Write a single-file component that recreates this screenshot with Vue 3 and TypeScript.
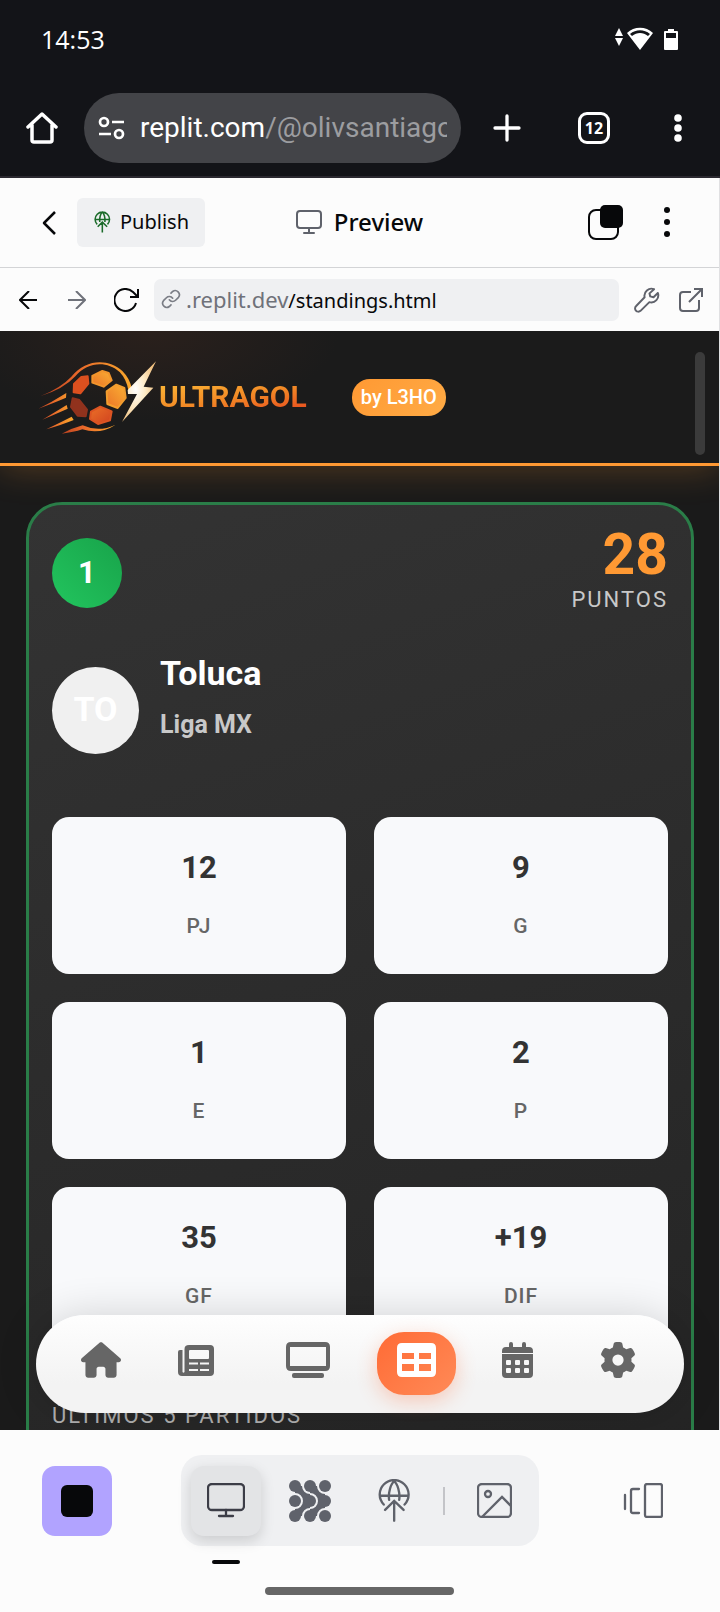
<script setup lang="ts">
interface Stat {
  value: string
  label: string
}

const stats: Stat[] = [
  { value: '12', label: 'PJ' },
  { value: '9', label: 'G' },
  { value: '1', label: 'E' },
  { value: '2', label: 'P' },
  { value: '35', label: 'GF' },
  { value: '+19', label: 'DIF' },
]

const dotRows: number[] = [18, 63, 108]
const calendarRows: number[] = [18, 26]
const calendarCols: number[] = [4, 13, 22]
</script>

<template>
  <div class="screen">
    <header class="status">
      <span class="clock">14:53</span>
      <svg class="status-icons" width="63" height="24" viewBox="0 0 63 24" fill="#fff" aria-hidden="true">
        <path d="M4 1l4 8H0zM4 19l4-8H0z" />
        <path fill-rule="evenodd" d="M12 6C19-1 31-1 38 6L25 23zM15 7l2 2c5-4 11-4 16 0l2-2c-6-5-14-5-20 0z" />
        <path fill-rule="evenodd" d="M53 2h6v2h3q1 0 1 1v17q0 1-1 1H50q-1 0-1-1V5q0-1 1-1h3zM51 6v5h10V6z" />
      </svg>
    </header>

    <div class="browser">
      <button class="plain home" aria-label="Inicio">
        <svg width="32" height="32" viewBox="0 0 32 32" fill="none" stroke="#fff" stroke-width="3.500" stroke-linejoin="round" stroke-linecap="round"><path d="M2 15L16 2l14 13M6 13v15q0 2 2 2h16q2 0 2-2V13" /></svg>
      </button>
      <button class="omnibox">
        <svg width="27" height="24" viewBox="0 0 27 24" fill="none" stroke="#fff" stroke-width="2.700" aria-hidden="true"><circle cx="6" cy="6" r="4" /><path d="M14 6h12M1 18h12" /><circle cx="21" cy="18" r="4" /></svg>
        <span class="omni-text">replit.com<span class="dim">/@olivsantiago</span></span>
      </button>
      <button class="plain" aria-label="Nueva pestaña">
        <svg width="28" height="28" viewBox="0 0 28 28" stroke="#fff" stroke-width="3.300" stroke-linecap="round"><path d="M14 2v24M2 14h24" /></svg>
      </button>
      <button class="tabs" aria-label="12 pestañas">12</button>
      <button class="plain" aria-label="Más">
        <svg width="8" height="28" viewBox="0 0 8 28" fill="#fff"><circle cx="4" cy="4" r="3.800" /><circle cx="4" cy="14" r="3.800" /><circle cx="4" cy="24" r="3.800" /></svg>
      </button>
    </div>

    <div class="page">
      <div class="pane-head">
        <div class="side">
          <button class="plain back" aria-label="Atrás">
            <svg width="16" height="26" viewBox="0 0 16 26" fill="none" stroke="#07080a" stroke-width="2.500" stroke-linejoin="round"><path d="M14 2L3 13l11 11" /></svg>
          </button>
          <button class="publish">
            <svg width="17" height="22" viewBox="54 148 98 128" fill="none" stroke="#1b6b2a" stroke-width="9" aria-hidden="true"><path d="M72 226A42 42 0 1 1 132 226M57 198H147M87 212C84 188 92 162 102 154C112 162 120 188 117 212M102 273V213M75 240L102 213L130 240" /></svg>
            Publish
          </button>
        </div>
        <h1 class="preview">
          <svg width="26" height="24" viewBox="0 0 26 24" fill="none" stroke="#5f626b" stroke-width="2" stroke-linecap="round" aria-hidden="true"><rect x="1" y="1" width="24" height="17" rx="3" /><path d="M13 18v5M8 23h10" /></svg>
          Preview
        </h1>
        <div class="side end">
          <button class="plain" aria-label="Pestañas abiertas">
            <svg width="35" height="35" viewBox="0 0 35 35"><rect x="1" y="5" width="29" height="29" rx="7" fill="none" stroke="#07080a" stroke-width="2" /><rect x="12" y="0" width="23" height="23" rx="5" fill="#07080a" /></svg>
          </button>
          <button class="plain" aria-label="Opciones">
            <svg width="6" height="31" viewBox="0 0 6 31" fill="#07080a"><circle cx="3" cy="3" r="3" /><circle cx="3" cy="15" r="3" /><circle cx="3" cy="27" r="3" /></svg>
          </button>
        </div>
      </div>

      <div class="url-row">
        <button class="plain" aria-label="Anterior">
          <svg width="18" height="18" viewBox="0 0 18 18" fill="none" stroke="#07080a" stroke-width="2"><path d="M18 9H1M10 0L1 9l9 9" /></svg>
        </button>
        <button class="plain forward" aria-label="Siguiente">
          <svg width="18" height="18" viewBox="0 0 18 18" fill="none" stroke="#6f727a" stroke-width="2"><path d="M0 9h17M8 0l9 9-9 9" /></svg>
        </button>
        <button class="plain reload" aria-label="Recargar">
          <svg width="26" height="24" viewBox="0 0 26 24" fill="none" stroke="#07080a" stroke-width="2"><path d="M22 15A11 11 0 1 1 19 4L24 9M24 1v8h-8" /></svg>
        </button>
        <button class="url-box">
          <svg width="20" height="20" viewBox="0 0 24 24" fill="none" stroke="#7a7d85" stroke-width="2" stroke-linecap="round" aria-hidden="true"><path d="M10 13a5 5 0 0 0 7.500.5l3.500-3.500a5 5 0 0 0-7-7l-2 2M14 11a5 5 0 0 0-7.500-.5l-3.500 3.500a5 5 0 0 0 7 7l2-2" /></svg>
          <span><span class="host">.replit.dev</span><span class="path">/standings.html</span></span>
        </button>
        <button class="plain wrench" aria-label="Herramientas">
          <svg width="26" height="26" viewBox="0 0 24 24" fill="none" stroke="#5f626b" stroke-width="1.800" stroke-linejoin="round"><path d="M18.500 2A6.500 6.500 0 0 0 9.800 9.500L2 17.500a2.800 2.800 0 0 0 4 4.500l8.200-8A6.500 6.500 0 0 0 22 5.500l-4 4-3-.8-.7-2.800z" /></svg>
        </button>
        <button class="plain" aria-label="Abrir en otra pestaña">
          <svg width="25" height="25" viewBox="0 0 25 25" fill="none" stroke="#5f626b" stroke-width="2"><path d="M12 5H4Q1 5 1 8v13q0 3 3 3h13q3 0 3-3v-8M15 2h8v8M23 2L10 15" /></svg>
        </button>
      </div>

      <main class="site">
        <div class="site-head">
          <a class="logo" href="#" aria-label="UltraGol">
            <svg width="122" height="75" viewBox="114 88 366 225" aria-hidden="true">
              <defs>
                <linearGradient id="flame" x1="0" x2="1"><stop offset="0" stop-color="#b8401f" /><stop offset=".4" stop-color="#e8672a" /><stop offset="1" stop-color="#fba92c" /></linearGradient>
                <linearGradient id="panel" x1="0" y1="1" x2="1" y2="0"><stop offset="0" stop-color="#ea7427" /><stop offset="1" stop-color="#fbb034" /></linearGradient>
                <linearGradient id="ember" x1="0" y1="0" x2="1" y2="1"><stop offset="0" stop-color="#ec7127" /><stop offset="1" stop-color="#d0421f" /></linearGradient>
                <radialGradient id="bolt" cx=".4" cy=".45" r=".6"><stop offset="0" stop-color="#fff" /><stop offset=".5" stop-color="#fde9c4" /><stop offset="1" stop-color="#f0c080" /></radialGradient>
              </defs>
              <g fill="url(#flame)">
                <path d="M125 196Q185 172 217 138C262 82 330 84 370 121Q393 144 398 173L388 178Q382 145 362 124C322 89 265 94 229 137Q193 176 125 196z" />
                <path d="M118 234Q158 215 202 187L201 201Q166 216 118 234zM130 267Q164 247 203 223L206 234Q172 249 130 267zM142 296Q178 278 218 258L224 268Q190 282 142 296z" />
                <path d="M188 309Q220 292 251 284Q299 306 350 282Q303 313 250 296Q224 305 188 309z" />
              </g>
              <g stroke-width="6" stroke-linejoin="round">
                <path fill="#dc501f" stroke="#dc501f" d="M247 139L266 137L268 159L244 188L224 185L225 160z" />
                <path fill="url(#panel)" stroke="#f2952c" d="M280 136L310 121L329 127L338 149L314 168L280 156z" />
                <path fill="url(#panel)" stroke="#f29d2e" d="M323 182L352 162L376 172L380 202L356 232L325 220z" />
                <path fill="url(#ember)" stroke="#dc5423" d="M304 228L338 242L333 269L297 280L273 265L276 243z" />
                <path fill="#91321d" stroke="#91321d" d="M221 203L241 208L264 237L260 257L236 255L216 229z" />
              </g>
              <path fill="url(#bolt)" d="M471 92L386 178L387 190L414 190L369 274L463 171L434 168z" />
            </svg>
            <span class="wordmark">ULTRAGOL</span>
          </a>
          <span class="badge">by L3HO</span>
          <span class="thumb"></span>
        </div>

        <article class="card">
          <div class="card-top">
            <span class="rank">1</span>
            <div class="points">
              <strong>28</strong>
              <span>PUNTOS</span>
            </div>
          </div>
          <div class="team">
            <span class="crest">TO</span>
            <div>
              <h2>Toluca</h2>
              <p>Liga MX</p>
            </div>
          </div>
          <dl class="stats">
            <div v-for="stat in stats" :key="stat.label" class="stat">
              <dd>{{ stat.value }}</dd>
              <dt>{{ stat.label }}</dt>
            </div>
          </dl>
          <p class="recent">ÚLTIMOS 5 PARTIDOS</p>
        </article>

        <nav class="dock">
          <a href="#" aria-label="Inicio">
            <svg width="40" height="36" viewBox="0 0 576 512" fill="#666"><path d="M575.800 255.500c0 18-15 32.100-32 32.100h-32l.7 160.200c0 2.700-.2 5.400-.5 8.100V472c0 22.100-17.900 40-40 40H392c-22.100 0-40-17.900-40-40v-88c0-17.700-14.300-32-32-32h-64c-17.700 0-32 14.300-32 32v88c0 22.100-17.900 40-40 40h-80c-22.100 0-40-17.900-40-40V287.600H32c-18 0-32-14-32-32.100 0-9 3-17 10-24L266.400 8c7-7 15-8 22-8s15 2 21 7l255.400 224.500c8 7 12 15 11 24z" /></svg>
          </a>
          <a href="#" aria-label="Noticias">
            <svg width="36" height="31" viewBox="0 0 36 31" fill="#666"><path fill-rule="evenodd" d="M11 0h21q4 0 4 4v23q0 4-4 4H4q-4 0-4-4V7q0-2 2-2h2.500v22q1 1.500 2 0V4q0-4 4.500-4zM12 5q-1 0-1 1v7q0 1 1 1h18q1 0 1-1V6q0-1-1-1zM11 17.500v2h9v-2zM22 17.500v2h9v-2zM11 24v2h9v-2zM22 24v2h9v-2z" /></svg>
          </a>
          <a href="#" aria-label="En vivo">
            <svg width="44" height="36" viewBox="0 0 44 36" fill="#666"><path fill-rule="evenodd" d="M5 0h34q5 0 5 5v19q0 5-5 5H5q-5 0-5-5V5q0-5 5-5zM4 5v19h36V5z" /><rect x="6" y="31" width="32" height="5" rx="2" /></svg>
          </a>
          <a class="current" href="#" aria-label="Tabla" aria-current="page">
            <svg width="39" height="34" viewBox="0 0 39 34" fill="#fff"><path fill-rule="evenodd" d="M5 0h29q5 0 5 5v24q0 5-5 5H5q-5 0-5-5V5q0-5 5-5zM5 10v6h12v-6zM22 10v6h12v-6zM5 21v7h12v-7zM22 21v7h12v-7z" /></svg>
          </a>
          <a href="#" aria-label="Calendario">
            <svg width="31" height="36" viewBox="0 0 31 36">
              <path fill="#666" d="M4 5h3V2a2 2 0 0 1 4 0v3h9V2a2 2 0 0 1 4 0v3h3q4 0 4 4v2H0V9q0-4 4-4zM0 12h31v20q0 4-4 4H4q-4 0-4-4z" />
              <g fill="#f8f8f8">
                <template v-for="y in calendarRows" :key="y">
                  <rect v-for="x in calendarCols" :key="x" :x="x" :y="y" width="5" height="5" rx="1" />
                </template>
              </g>
            </svg>
          </a>
          <a href="#" aria-label="Ajustes">
            <svg width="36" height="36" viewBox="0 0 512 512" fill="#666"><path d="M495.900 166.600c3.200 8.700.5 18.400-6.400 24.600l-43.300 39.400c1.100 8.300 1.700 16.800 1.700 25.400s-.6 17.100-1.700 25.400l43.300 39.400c6.900 6.200 9.600 15.900 6.400 24.600-4.400 11.900-9.700 23.300-15.800 34.300l-4.700 8.100c-6.600 11-14 21.400-22.100 31.200-5.900 7.200-15.700 9.600-24.500 6.800l-55.700-17.700c-13.400 10.300-28.200 18.900-44 25.400l-12.500 57.100c-2 9.100-9 16.300-18.200 17.800-13.800 2.300-28 3.500-42.500 3.500s-28.700-1.200-42.500-3.500c-9.200-1.500-16.200-8.700-18.200-17.800l-12.500-57.100c-15.800-6.500-30.600-15.100-44-25.400l-55.700 17.700c-8.800 2.800-18.600.3-24.500-6.800-8.100-9.800-15.500-20.200-22.100-31.200l-4.700-8.100c-6.100-11-11.400-22.400-15.800-34.300-3.200-8.700-.5-18.400 6.400-24.600l43.300-39.400C64.600 273.100 64 264.600 64 256s.6-17.100 1.700-25.400l-43.300-39.400c-6.900-6.200-9.600-15.900-6.400-24.600 4.400-11.900 9.700-23.300 15.800-34.300l4.700-8.100c6.600-11 14-21.400 22.100-31.200 5.900-7.200 15.700-9.600 24.500-6.800l55.700 17.700c13.400-10.300 28.200-18.900 44-25.400l12.500-57.100c2-9.100 9-16.300 18.200-17.800C227.300 1.200 241.500 0 256 0s28.700 1.200 42.500 3.500c9.200 1.500 16.200 8.700 18.200 17.800l12.500 57.100c15.800 6.500 30.600 15.100 44 25.400l55.700-17.700c8.800-2.800 18.600-.3 24.500 6.800 8.100 9.800 15.500 20.200 22.100 31.200l4.700 8.100c6.100 11 11.400 22.400 15.800 34.300zM256 336a80 80 0 1 0 0-160 80 80 0 1 0 0 160z" /></svg>
          </a>
        </nav>
      </main>
    </div>

    <footer class="tools">
      <div class="tool-row">
        <button class="stop" aria-label="Detener"><span></span></button>
        <div class="group">
          <button class="tool active" aria-label="Preview">
            <svg width="38" height="35" viewBox="0 0 38 35" fill="none" stroke="#3c3d47" stroke-width="2.300" stroke-linecap="round"><rect x="1" y="1" width="36" height="26" rx="4" /><path d="M19 27v6M12 33h14" /></svg>
          </button>
          <button class="tool" aria-label="Agent">
            <svg width="42" height="42" viewBox="0 0 126 126" fill="#5f626b">
              <template v-for="y in dotRows" :key="y">
                <circle v-for="x in dotRows" :key="x" :cx="x" :cy="y" r="18" />
              </template>
              <path d="M18 18H39A24 24 0 0 0 63 42V63H42A24 24 0 0 0 18 39ZM63 63V84A24 24 0 0 0 39 108H18V87A24 24 0 0 0 42 63Z" />
              <path d="M63 18H84A24 24 0 0 0 108 42V63H87A24 24 0 0 0 63 39ZM108 63V84A24 24 0 0 0 84 108H63V87A24 24 0 0 0 87 63Z" />
            </svg>
          </button>
          <button class="tool" aria-label="Publicar">
            <svg width="33" height="43" viewBox="54 148 98 128" fill="none" stroke="#5f626b" stroke-width="7" stroke-linecap="round"><path d="M71 224A43 43 0 1 1 133 224M59 198H145M87 210C84 188 92 162 102 155C112 162 120 188 117 210M102 272V213M75 240L102 213L130 240" /></svg>
          </button>
          <span class="rule"></span>
          <button class="tool" aria-label="Imagen">
            <svg width="35" height="35" viewBox="0 0 35 35" fill="none" stroke="#5f626b" stroke-width="2.300"><rect x="1" y="1" width="33" height="33" rx="4" /><circle cx="11" cy="11" r="3" /><path d="M5 34l20-20 9 9" /></svg>
          </button>
        </div>
        <button class="plain panes" aria-label="Paneles">
          <svg width="40" height="35" viewBox="0 0 40 35" fill="none" stroke="#5f626b" stroke-width="2.300" stroke-linecap="round"><rect x="22" y="1" width="17" height="33" rx="2" /><path d="M16 6h-6q-2 0-2 2v20q0 2 2 2h6M2 12v14" /></svg>
        </button>
      </div>
      <span class="marker"></span>
      <span class="gesture"></span>
    </footer>
  </div>
</template>

<style>
body {
  margin: 0;
  background: #fcfcfc;
}
</style>

<style scoped>
.screen {
  display: flex;
  flex-direction: column;
  height: 100vh;
  background: #131418;
  font-family: Roboto, "Liberation Sans", sans-serif;
}
.screen *,
.screen *::before {
  box-sizing: border-box;
}
svg {
  display: block;
  flex: none;
}
button {
  font: inherit;
  color: inherit;
  border: 0;
  padding: 0;
  background: none;
  text-align: left;
}
h1, h2, p, dl, dd, dt {
  margin: 0;
}
.status {
  display: flex;
  align-items: center;
  justify-content: space-between;
  height: 80px;
  padding: 0 42px 2px 41px;
  color: #fff;
}
.clock {
  font: 500 25px/32px "Open Sans", sans-serif;
}
.browser {
  display: flex;
  align-items: center;
  height: 98px;
  padding: 0 38px 0 26px;
  border-bottom: 2px solid #2b2930;
  color: #fff;
}
.omnibox {
  display: flex;
  align-items: center;
  gap: 15px;
  flex: 1;
  min-width: 0;
  height: 70px;
  margin: 0 32px 0 26px;
  padding: 0 14px;
  border-radius: 35px;
  background: #434448;
}
.omni-text {
  overflow: hidden;
  white-space: nowrap;
  font: 400 28px/40px Roboto, sans-serif;
}
.dim {
  color: #9c9da0;
}
.tabs {
  width: 32px;
  height: 32px;
  margin: 0 64px 0 57px;
  border: 3px solid #fff;
  border-radius: 9px;
  font: 700 16px/24px "Open Sans", sans-serif;
  text-align: center;
}
.page {
  display: flex;
  flex-direction: column;
  flex: 1;
  min-height: 0;
  border-right: 1px solid #e0e0e2;
  background: #fcfcfc;
  color: #07080a;
}
.pane-head {
  display: flex;
  align-items: center;
  justify-content: space-between;
  height: 90px;
  flex: none;
  padding: 0 49px 0 41px;
  border-bottom: 1px solid #d3d4d6;
}
.side {
  display: flex;
  align-items: center;
  flex: 1;
  gap: 20px;
}
.end {
  justify-content: flex-end;
  gap: 41px;
}
.publish {
  display: flex;
  align-items: center;
  gap: 9px;
  height: 49px;
  padding: 0 16px 2px 17px;
  border-radius: 6px;
  background: #eff0f2;
  font: 400 20px/28px "Noto Sans", sans-serif;
}
.preview {
  display: flex;
  align-items: center;
  gap: 12px;
  padding: 0 0 2px 8px;
  font: 500 24px/32px "Noto Sans", sans-serif;
}
.url-row {
  display: flex;
  align-items: center;
  height: 63px;
  flex: none;
  padding: 0 15px 0 19px;
}
.forward {
  margin-left: 31px;
}
.reload {
  margin: 0 14px 0 28px;
}
.url-box {
  display: flex;
  align-items: center;
  gap: 5px;
  flex: 1;
  min-width: 0;
  height: 42px;
  padding: 0 7px 2px;
  border-radius: 7px;
  background: #eff0f2;
  font-family: "Noto Sans", sans-serif;
  white-space: nowrap;
}
.host {
  color: #6f727a;
  font-size: 22px;
}
.path {
  font-size: 20px;
}
.wrench {
  margin: 0 19px 0 15px;
}
.site {
  position: relative;
  flex: 1;
  min-height: 0;
  overflow: hidden;
  background: #1a1a1a;
}
.site-head {
  position: relative;
  display: flex;
  align-items: center;
  height: 135px;
  padding-left: 37px;
  border-bottom: 3px solid #ff9933;
  background: radial-gradient(ellipse 190px 90px at 150px 0, #2a201c, #1b1b1b);
  box-shadow: 0 4px 32px rgba(255, 153, 51, 0.24);
}
.logo {
  display: flex;
  align-items: center;
  text-decoration: none;
}
.wordmark {
  font: 700 30px/36px Roboto, sans-serif;
  color: transparent;
  background: linear-gradient(170deg, #fbb034 15%, #f28a26 50%, #e8501f 90%);
  background-clip: text;
}
.badge {
  margin-left: 45px;
  padding: 0 9px;
  border-radius: 18px;
  background: linear-gradient(135deg, #ff9933, #ffab45);
  color: #fff;
  font: 500 20px/37px Roboto, sans-serif;
}
.thumb {
  position: absolute;
  right: 14px;
  top: 21px;
  width: 10px;
  height: 103px;
  border-radius: 5px;
  background: #3b3b3b;
}
.card {
  margin: 36px 25px 0 26px;
  padding: 25px 23px 60px;
  border: 3px solid #2a7d48;
  border-radius: 36px;
  background: linear-gradient(160deg, #333, #242424);
  position: relative;
}
.card-top {
  display: flex;
  justify-content: space-between;
  align-items: flex-start;
}
.rank {
  width: 70px;
  height: 70px;
  margin-top: 8px;
  border-radius: 50%;
  background: linear-gradient(45deg, #22c55e, #18a34a);
  color: #fff;
  font-size: 31px;
  font-weight: 700;
  line-height: 70px;
  text-align: center;
}
.points {
  display: flex;
  flex-direction: column;
  align-items: flex-end;
}
.points strong {
  color: #ff9933;
  font-size: 57px;
  line-height: 50px;
}
.points span {
  margin-top: 5px;
  color: #c8c8c8;
  font-size: 22px;
  line-height: 30px;
  letter-spacing: 2px;
}
.team {
  display: flex;
  align-items: center;
  gap: 21px;
  margin-top: 29px;
}
.crest {
  width: 87px;
  height: 87px;
  margin-top: 23px;
  border-radius: 50%;
  background: #f0f0f0;
  color: #fff;
  font-size: 34px;
  font-weight: 700;
  line-height: 84px;
  text-align: center;
}
.team h2 {
  color: #fff;
  font-size: 34px;
  line-height: 52px;
}
.team p {
  color: #c8c8c8;
  font-size: 25px;
  font-weight: 700;
  line-height: 52px;
}
.stats {
  display: grid;
  grid-template-columns: 1fr 1fr;
  gap: 28px;
  margin-top: 63px;
}
.stat {
  padding: 29px 0 26px;
  border-radius: 17px;
  background: #f8f9fb;
  text-align: center;
}
.stat dd {
  color: #333;
  font-size: 31px;
  font-weight: 700;
  line-height: 44px;
}
.stat dt {
  margin-top: 14px;
  color: #666;
  font-size: 21px;
  font-weight: 500;
  line-height: 44px;
  letter-spacing: 1px;
}
.recent {
  margin-top: 54px;
  color: #b0b0b0;
  font-size: 22px;
  line-height: 36px;
  letter-spacing: 2px;
}
.dock {
  position: absolute;
  left: 36px;
  right: 35px;
  bottom: 17px;
  display: grid;
  grid-template-columns: 65fr 84fr 100fr 79fr 83fr 77fr;
  gap: 20px;
  place-items: center;
  height: 98px;
  padding: 0 28px 8px 33px;
  border-radius: 49px;
  background: linear-gradient(#fefefe, #f3f3f3 70%);
  box-shadow: 0 0 40px rgba(0, 0, 0, 0.16);
}
.current {
  margin-top: 7px;
  padding: 11px 20px 18px;
  border-radius: 27px;
  background: linear-gradient(135deg, #ff6b35, #ff8a57);
  box-shadow: 0 6px 20px rgba(255, 107, 53, 0.3);
}
.tools {
  position: relative;
  flex: none;
  height: 182px;
  padding: 25px 57px 0 42px;
  background: #fcfcfc;
}
.tool-row {
  display: flex;
  align-items: center;
}
.stop {
  display: grid;
  place-items: center;
  width: 70px;
  height: 70px;
  border-radius: 13px;
  background: #b1a3ff;
}
.stop span {
  width: 32px;
  height: 32px;
  border-radius: 6px;
  background: #07080a;
}
.group {
  display: flex;
  align-items: center;
  height: 91px;
  margin: 0 auto 0 69px;
  padding: 0 10px;
  gap: 14px;
  border-radius: 21px;
  background: #eff0f2;
}
.tool {
  display: grid;
  place-items: center;
  width: 70px;
  height: 70px;
  border-radius: 13px;
}
.active {
  background: #e3e4e6;
  box-shadow: 0 5px 14px rgba(0, 0, 0, 0.15);
}
.rule {
  width: 2px;
  height: 28px;
  background: #c3c4c8;
}
.marker {
  position: absolute;
  left: 212px;
  top: 130px;
  width: 28px;
  height: 4px;
  border-radius: 2px;
  background: #07080a;
}
.gesture {
  position: absolute;
  left: 50%;
  bottom: 17px;
  width: 189px;
  height: 8px;
  margin-left: -95px;
  border-radius: 4px;
  background: #666;
}
</style>
